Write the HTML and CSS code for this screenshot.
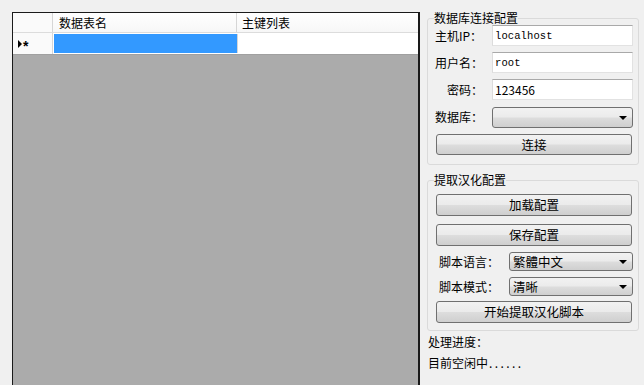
FILE: index.html
```html
<!DOCTYPE html>
<html lang="zh-CN">
<head>
<meta charset="utf-8">
<title>汉化脚本提取</title>
<link rel="stylesheet" href="styles.css">
</head>
<body>
<div class="app">
  <div class="grid">
    <div class="grid-head">
      <div class="cell rowhead"></div>
      <div class="cell col1">数据表名</div>
      <div class="cell col2">主键列表</div>
    </div>
    <div class="grid-row">
      <div class="cell rowhead"><span class="tri"></span><span class="star">*</span></div>
      <div class="cell col1 sel"></div>
      <div class="cell col2"></div>
    </div>
  </div>
  <div class="side">
    <fieldset class="group g1">
      <legend>数据库连接配置</legend>
      <div class="field"><span class="lbl">主机IP：</span><div class="textbox mono">localhost</div></div>
      <div class="field"><span class="lbl">用户名：</span><div class="textbox mono">root</div></div>
      <div class="field"><span class="lbl indent">密码：</span><div class="textbox">123456</div></div>
      <div class="field"><span class="lbl">数据库：</span><div class="combo"><span class="combo-text"></span><span class="arrow"></span></div></div>
      <div class="button">连接</div>
    </fieldset>
    <fieldset class="group g2">
      <legend>提取汉化配置</legend>
      <div class="button b1">加载配置</div>
      <div class="button b2">保存配置</div>
      <div class="field f2 r1"><span class="lbl2">脚本语言：</span><div class="combo combo2"><span class="combo-text">繁體中文</span><span class="arrow"></span></div></div>
      <div class="field f2 r2"><span class="lbl2">脚本模式：</span><div class="combo combo2"><span class="combo-text">清晰</span><span class="arrow"></span></div></div>
      <div class="button b3">开始提取汉化脚本</div>
    </fieldset>
    <div class="status">处理进度：</div>
    <div class="status s2">目前空闲中<span class="dots">......</span></div>
  </div>
</div>
</body>
</html>
```
FILE: styles.css
```css
* { box-sizing: border-box; }
html, body {
  margin: 0;
  padding: 0;
  background: #f0f0f0;
  font-family: "Noto Sans CJK SC", "Noto Sans", sans-serif;
  font-size: 12px;
  line-height: 14px;
  color: #000;
  overflow: hidden;
}
.app {
  display: flex;
  align-items: flex-start;
  padding: 12px 0 0 12px;
  height: 385px;
}
.grid {
  width: 408px;
  height: 380px;
  border: 1px solid #1a1a1a;
  border-right-width: 2px;
  background: #ababab;
  flex: none;
}
.grid-head, .grid-row {
  display: flex;
  background: #fff;
}
.grid-head {
  height: 20px;
  border-bottom: 1px solid #dcdcdc;
  background: linear-gradient(#ffffff, #f7f7f7);
}
.grid-row {
  height: 22px;
  border-bottom: 1px solid #a0a0a0;
}
.cell {
  border-right: 1px solid #d6d6d6;
  padding: 3px 0 0 6px;
  white-space: nowrap;
}
.rowhead { width: 40px; padding: 0 0 0 5px; display: flex; align-items: center; background: #fafafa; }
.col1 { width: 184px; }
.col2 { flex: 1; border-right: none; }
.grid-head .col2 { padding-left: 5px; }
.sel { background: #3399ff; margin: 1px 0 1px 1px; }
.tri {
  width: 0; height: 0;
  border-top: 4.5px solid transparent;
  border-bottom: 4.5px solid transparent;
  border-left: 4.5px solid #000;
}
.star { font-family: "Liberation Sans", sans-serif; font-size: 14px; font-weight: bold; margin-left: 1px; margin-top: 4px; }

.side {
  margin-left: 7px;
  width: 212px;
  flex: none;
}
.group {
  margin: 0;
  border: 1px solid #dadada;
  border-radius: 3px;
  padding: 0 5px 9px 7px;
  min-width: 0;
}
.group legend {
  padding: 0;
  margin-left: -1px;
  line-height: 14px;
}
.g1 { display: flex; flex-direction: column; gap: 6px; padding-top: 0; margin-top: -1px; }
.field { display: flex; align-items: center; height: 21px; }
.lbl { width: 57px; flex: none; white-space: nowrap; }
.lbl.indent { padding-left: 12px; }
.textbox {
  width: 141px;
  height: 21px;
  background: #fff;
  border: 1px solid;
  border-color: #a9a9a9 #e2e2e2 #e2e2e2 #dcdcdc;
  padding: 3px 0 0 2px;
  font-size: 12px;
  line-height: 14px;
}
.mono { font-family: "Liberation Mono", "DejaVu Sans Mono", monospace; font-size: 10.5px; letter-spacing: 0.1px; padding-top: 3px; }
.combo, .button {
  border: 1px solid #707070;
  border-radius: 3px;
  background: linear-gradient(#f2f2f2 0%, #ebebeb 48%, #dddddd 52%, #cfcfcf 100%);
}
.combo {
  width: 141px;
  height: 21px;
  display: flex;
  align-items: center;
  justify-content: space-between;
  padding: 0 5px 0 3px;
  margin-top: 1px;
}
.arrow {
  width: 0; height: 0;
  border-left: 4px solid transparent;
  border-right: 4px solid transparent;
  border-top: 4px solid #000;
  margin-top: 1px;
}
.button {
  height: 21px;
  text-align: center;
  line-height: 19px;
  font-size: 12.5px;
  margin-left: 1px;
  width: 196px;
  margin-top: 1px;
}
.g2 { margin-top: 8px; padding-bottom: 7px; }
.g2 .button { height: 22px; line-height: 20px; }
.b1 { margin-top: 7px; }
.b2 { margin-top: 8px; }
.f2 { height: 19px; }
.r1 { margin-top: 6px; }
.r2 { margin-top: 6px; }
.b3 { margin-top: 5px; }
.lbl2 { width: 74px; padding-left: 4px; flex: none; white-space: nowrap; }
.combo2 { width: 124px; height: 19px; margin-top: 0; }
.combo-text { font-size: 12.5px; }
.status { margin: 4px 0 0 1px; }
.s2 { margin-top: 7px; }
.dots { letter-spacing: 2.4px; margin-left: 1px; }
```
